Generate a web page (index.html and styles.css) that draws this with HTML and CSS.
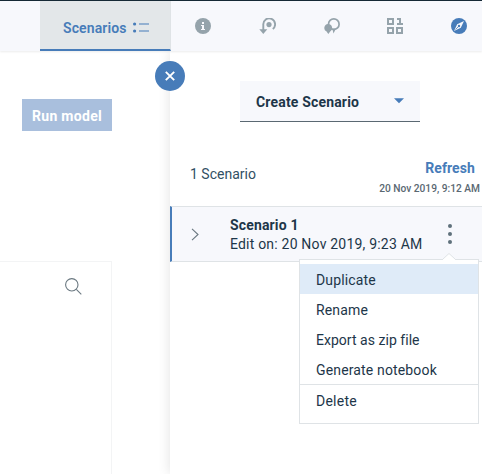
FILE: index.html
```html
<!DOCTYPE html>
<html lang="en">
<head>
<meta charset="utf-8">
<title>Scenarios</title>
<link rel="stylesheet" href="styles.css">
</head>
<body>
<div class="app">
  <header class="topbar">
    <div class="tab">
      <span class="tab-label">Scenarios</span>
      <svg class="tab-icon" width="17" height="12" viewBox="0 0 17 12" fill="#477cb9"><circle cx="1.6" cy="2" r="1.6"/><circle cx="1.6" cy="9" r="1.6"/><path d="M6 1.5h10v1H6zM6 8.5h10v1H6z"/></svg>
    </div>
    <nav class="tools">
      <svg width="16" height="16" viewBox="0 0 16 16"><circle cx="8" cy="8" r="8" fill="#95a3ab"/><path d="M7 4h2v2H7zM6 7h3v4h1v1H6v-1h1V8H6z" fill="#f7f8fc"/></svg>
      <svg width="17" height="16" viewBox="0 0 17 16"><path d="M4.3 14V6.8a5.9 5.9 0 1 1 9.5 4.2" fill="none" stroke="#95a3ab" stroke-width="1.9"/><circle cx="10" cy="6.6" r="2.6" fill="#95a3ab"/><path d="M.3 11.3h8L4.3 16z" fill="#95a3ab"/></svg>
      <svg width="16" height="16" viewBox="0 0 16 16"><circle cx="9.8" cy="6.2" r="5.3" fill="none" stroke="#95a3ab" stroke-width="1.7"/><path d="M8.2 10.5h3.8l-2.5 5z" fill="#95a3ab"/><path d="M4 6a4 4 0 0 1 2.2 7.4L4.3 16l-1.7-2.4A4 4 0 0 1 4 6z" fill="#95a3ab"/></svg>
      <svg width="16" height="16" viewBox="0 0 16 16"><path d="M1 1h5v5H1zM1 10h5v5H1zM10 10h5v5h-5z M10 1h3v5M10 6H16" fill="none" stroke="#95a3ab" stroke-width="2"/></svg>
      <svg width="16" height="16" viewBox="0 0 16 16"><circle cx="8" cy="8" r="8" fill="#477cb9"/><path d="M13 3L9.8 9.8 3 13l3.2-6.8z" fill="#f7f8fc"/><path d="M4.5 11.5L8 8" stroke="#477cb9" stroke-width=".8"/><circle cx="8" cy="8" r="1.2" fill="#477cb9"/></svg>
    </nav>
  </header>
  <div class="body">
    <main class="model">
      <button class="run"><span>Run model</span></button>
      <section class="card">
        <svg width="17" height="17" viewBox="0 0 17 17" fill="none" stroke="#6a7880" stroke-width="1.1"><circle cx="6.8" cy="6.8" r="6.2"/><path d="M11.3 11.3l5 5"/></svg>
      </section>
    </main>
    <aside class="panel">
      <button class="close"><svg width="12" height="12" viewBox="0 0 12 12"><path d="M1.8 1.8l8.4 8.4M10.2 1.8l-8.4 8.4" stroke="#fff" stroke-width="1.9"/></svg></button>
      <div class="create"><span class="create-label">Create Scenario</span><svg width="10" height="6" viewBox="0 0 10 6"><path d="M0 0.3h10L5 5.3z" fill="#477cb9"/></svg></div>
      <div class="summary">
        <span class="count">1 Scenario</span>
        <div class="status"><a class="refresh">Refresh</a><span class="time">20 Nov 2019, 9:12 AM</span></div>
      </div>
      <div class="row">
        <svg class="chevron" width="8" height="13" viewBox="0 0 8 13" fill="none" stroke="#6a7880" stroke-width="1.1"><path d="M1 .8l6 5.7-6 5.7"/></svg>
        <div class="info"><strong class="name">Scenario 1</strong><span class="edited">Edit on: 20 Nov 2019, 9:23 AM</span></div>
        <svg class="dots" width="4" height="20" viewBox="0 0 4 20" fill="#5f717b"><circle cx="2" cy="2" r="2"/><circle cx="2" cy="10" r="2"/><circle cx="2" cy="18" r="2"/></svg>
        <div class="menu">
          <svg class="arrow" width="14" height="7" viewBox="0 0 14 7"><path d="M1 6l6-5.5L13 6v1H1z" fill="#fff"/><path d="M1 6l6-5.5L13 6" fill="none" stroke="#dfe3e6"/></svg>
          <div class="item active"><span class="duplicate">Duplicate</span></div>
          <div class="item"><span class="rename">Rename</span></div>
          <div class="item"><span class="export">Export as zip file</span></div>
          <div class="item"><span class="generate">Generate notebook</span></div>
          <div class="item last"><span class="delete">Delete</span></div>
        </div>
      </div>
    </aside>
  </div>
</div>
</body>
</html>
```
FILE: styles.css
```css
* { box-sizing: border-box; }
body { margin: 0; font: 14px/18px Roboto, "Liberation Sans", sans-serif; color: #1d3649; background: #fff; }
button { border: 0; padding: 0; font: inherit; }
svg { display: block; flex: none; }
span, strong, a { white-space: nowrap; }
.app { height: 474px; display: flex; flex-direction: column; overflow: hidden; }
.topbar { height: 51px; flex: none; display: flex; border-top: 1px solid #152935; background: #f7f8fc; box-shadow: 0 1px 2px rgba(0,0,0,.08); position: relative; z-index: 1; }
.tab { width: 131px; margin-left: 40px; padding: 6px 0 0 23px; display: flex; align-items: center; background: #e3e7e9; border-right: 1px solid #dfe3e6; border-bottom: 2px solid #477cb9; }
.tab-label { width: 70px; font-weight: 600; color: #477cb9; letter-spacing: .12px; }
.tools { width: 311px; padding: 17px 15px 0 24px; display: flex; justify-content: space-between; }
.body { display: flex; flex: 1; }
.model { width: 170px; padding-top: 48px; display: flex; flex-direction: column; }
.run { width: 90px; height: 32px; margin-left: 22px; padding-top: 2px; background: #a9bfdd; color: #fff; font-weight: 700; letter-spacing: .3px; }
.card { width: 112px; flex: 1; margin-top: 130px; padding: 16px 0 0 65px; border: solid #f3f4f5; border-width: 1px 1px 0 0; }
.panel { position: relative; width: 312px; background: #fff; box-shadow: 0 0 12px rgba(0,0,0,.12); }
.close { position: absolute; left: -15px; top: 10px; width: 30px; height: 30px; border-radius: 50%; background: #477cb9; display: flex; align-items: center; justify-content: center; z-index: 2; }
.create { width: 180px; height: 41px; margin: 30px 0 0 70px; padding: 0 16px; display: flex; align-items: center; justify-content: space-between; background: #f7f8fc; border-bottom: 1px solid #5a6872; }
.create-label { padding-top: 2px; font-weight: 700; letter-spacing: .17px; }
.summary { height: 84px; padding: 37px 2px 0 20px; display: flex; justify-content: space-between; }
.count { margin-top: 6px; color: #325064; }
.status { display: flex; flex-direction: column; align-items: flex-end; }
.refresh { margin-right: 5px; color: #477cb9; font-weight: 700; letter-spacing: .1px; }
.time { margin-top: 4px; font-size: 10.2px; line-height: 16px; font-weight: 500; color: #5a6872; }
.row { position: relative; height: 56px; display: flex; align-items: center; border: solid #dfe3e6; border-width: 1px 0; border-left: 2px solid #477cb9; background: #f7f8fc; }
.chevron { margin-left: 19px; }
.info { width: 217px; margin-left: 31px; padding-top: 2px; display: flex; flex-direction: column; line-height: 19px; }
.info .name { font-weight: 700; letter-spacing: .15px; }
.edited { letter-spacing: .2px; }
.dots { margin-left: 1px; }
.menu { position: absolute; left: 127px; top: 52px; width: 180px; height: 165px; padding-top: 4px; border: 1px solid #dfe3e6; background: #fff; }
.arrow { position: absolute; right: 22px; top: -7px; }
.item { height: 30px; padding: 2px 0 0 16px; display: flex; align-items: center; letter-spacing: .15px; }
.export { letter-spacing: .03px; }
.active { background: #dfebf8; }
.last { height: 32px; padding-top: 0; border-top: 1px solid #dfe3e6; letter-spacing: .25px; }
```
